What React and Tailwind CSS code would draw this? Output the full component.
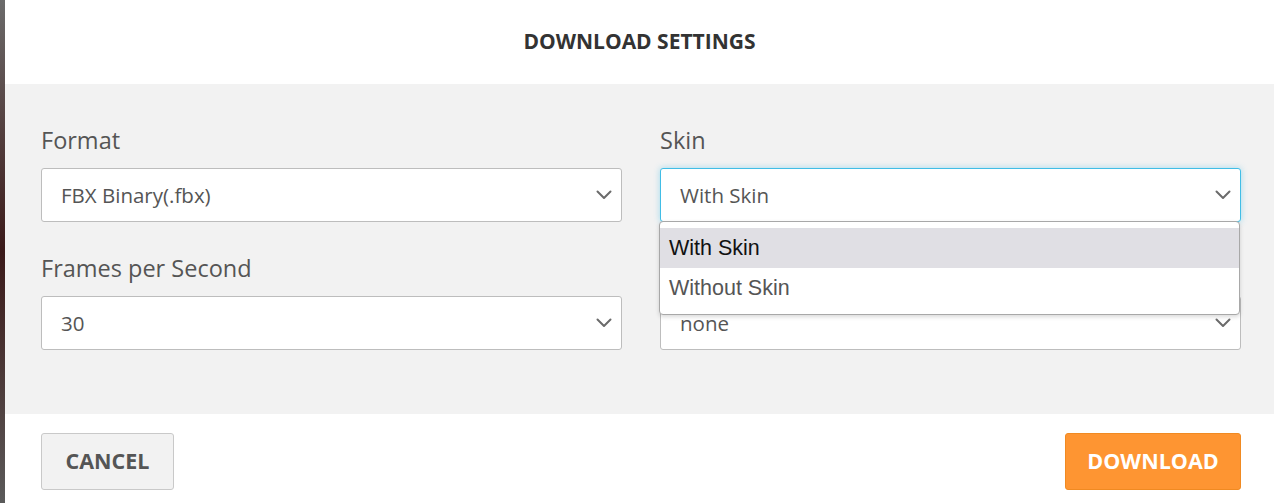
import React from 'react';

const font = { fontFamily: '"Open Sans", "Noto Sans", sans-serif' };

function Chevron() {
  return (
    <svg width="16" height="10" viewBox="0 0 16 10" fill="none" className="shrink-0">
      <path d="M1.5 1.5 L8 8 L14.5 1.5" stroke="#6b6b6b" strokeWidth="2" strokeLinecap="round" strokeLinejoin="round" />
    </svg>
  );
}

function Select({ value, focused }) {
  return (
    <div
      className={
        'flex h-[54px] items-center justify-between rounded-[3px] border bg-white pl-[19px] pr-[9px] ' +
        (focused
          ? 'border-[#41bde6] shadow-[0_0_6px_rgba(65,189,230,0.45)]'
          : 'border-[#bdbdbd]')
      }
    >
      <span className="text-[20.5px] text-[#555]">{value}</span>
      <Chevron />
    </div>
  );
}

export default function App() {
  return (
    <div className="flex h-[503px] w-[1274px] overflow-hidden" style={font}>
      <div className="w-[5px] bg-gradient-to-b from-[#6b6b6b] via-[#3b1a1a] to-[#5a5a5a]" />
      <div className="flex flex-1 flex-col bg-white">
        <div className="flex h-[84px] items-center justify-center">
          <h1 className="text-[21px] font-bold text-[#333]">DOWNLOAD SETTINGS</h1>
        </div>
        <div className="grid h-[330px] grid-cols-2 gap-x-[38px] bg-[#f2f2f2] pl-[36px] pr-[33px] pt-[40px]">
          <div>
            <label className="block h-[32px] text-[23.5px] leading-[32px] text-[#555]">Format</label>
            <div className="mt-[12px]">
              <Select value="FBX Binary(.fbx)" />
            </div>
            <label className="mt-[30px] block h-[32px] text-[23.5px] leading-[32px] text-[#555]">Frames per Second</label>
            <div className="mt-[12px]">
              <Select value="30" />
            </div>
          </div>
          <div>
            <label className="block h-[32px] text-[23.5px] leading-[32px] text-[#555]">Skin</label>
            <div className="relative mt-[12px]">
              <Select value="With Skin" focused />
              <div
                className="absolute left-[-1px] right-[1px] top-[53px] z-10 rounded-[4px] border border-[#a8a8a8] bg-white py-[6px] shadow-[0_2px_4px_rgba(0,0,0,0.15)]"
                style={{ fontFamily: '"Liberation Sans", Arial, sans-serif' }}
              >
                <div className="flex h-[40px] items-center bg-[#e0dfe4] pl-[9px] text-[21.5px] text-[#111]">With Skin</div>
                <div className="flex h-[40px] items-center pl-[9px] text-[21.5px] text-[#555]">Without Skin</div>
              </div>
            </div>
            <div className="mt-[30px] h-[32px]" />
            <div className="mt-[12px]">
              <Select value="none" />
            </div>
          </div>
        </div>
        <div className="flex flex-1 items-center justify-between pl-[36px] pr-[33px] pt-[5px]">
          <button className="h-[57px] w-[133px] rounded-[3px] border border-[#c9c9c9] bg-[#f2f2f2] text-[21.5px] font-bold text-[#555]">
            CANCEL
          </button>
          <button className="h-[57px] w-[176px] rounded-[3px] border border-[#f08a22] bg-[#fe9532] text-[21.5px] font-bold text-white">
            DOWNLOAD
          </button>
        </div>
      </div>
    </div>
  );
}
